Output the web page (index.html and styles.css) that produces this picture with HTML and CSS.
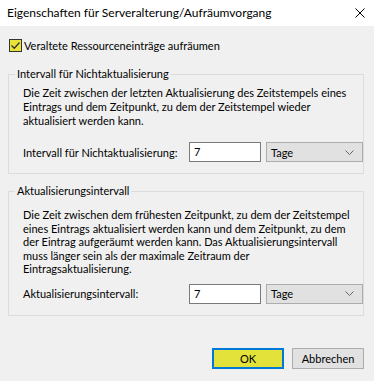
FILE: index.html
```html
<!DOCTYPE html>
<html lang="de">
<head>
<meta charset="utf-8">
<title>Eigenschaften für Serveralterung/Aufräumvorgang</title>
<link rel="stylesheet" href="styles.css">
</head>
<body>
<div class="dialog">
  <div class="titlebar">
    <span class="title">Eigenschaften für Serveralterung/Aufräumvorgang</span>
    <svg class="close" width="10" height="10" viewBox="0 0 10 10"><path d="M0.5 0.5 L9.5 9.5 M9.5 0.5 L0.5 9.5" stroke="#000" stroke-width="1" fill="none"/></svg>
  </div>
  <div class="body">
    <label class="check">
      <span class="box"><svg width="11" height="11" viewBox="0 0 11 11"><path d="M1.5 5.5 L4.3 8.3 L9.5 2.5" stroke="#333" stroke-width="1.3" fill="none"/></svg></span>
      <span>Veraltete Ressourceneinträge aufräumen</span>
    </label>

    <fieldset class="group g1">
      <legend>Intervall für Nichtaktualisierung</legend>
      <p class="desc">Die Zeit zwischen der letzten Aktualisierung des Zeitstempels eines<br>Eintrags und dem Zeitpunkt, zu dem der Zeitstempel wieder<br>aktualisiert werden kann.</p>
      <div class="row r1">
        <span class="lbl">Intervall für Nichtaktualisierung:</span>
        <span class="input">7</span>
        <span class="select">Tage<svg class="chev" width="9" height="5" viewBox="0 0 9 5"><path d="M0.5 0.5 L4.5 4.5 L8.5 0.5" stroke="#666" stroke-width="1" fill="none"/></svg></span>
      </div>
    </fieldset>

    <fieldset class="group g2">
      <legend>Aktualisierungsintervall</legend>
      <p class="desc">Die Zeit zwischen dem frühesten Zeitpunkt, zu dem der Zeitstempel<br>eines Eintrags aktualisiert werden kann und dem Zeitpunkt, zu dem<br>der Eintrag aufgeräumt werden kann. Das Aktualisierungsintervall<br>muss länger sein als der maximale Zeitraum der<br>Eintragsaktualisierung.</p>
      <div class="row r2">
        <span class="lbl">Aktualisierungsintervall:</span>
        <span class="input">7</span>
        <span class="select">Tage<svg class="chev" width="9" height="5" viewBox="0 0 9 5"><path d="M0.5 0.5 L4.5 4.5 L8.5 0.5" stroke="#666" stroke-width="1" fill="none"/></svg></span>
      </div>
    </fieldset>

    <div class="buttons">
      <span class="btn ok">OK</span>
      <span class="btn">Abbrechen</span>
    </div>
  </div>
</div>
</body>
</html>
```
FILE: styles.css
```css
* { box-sizing: border-box; }
html, body { margin: 0; padding: 0; }
body {
  width: 374px;
  height: 381px;
  background: #f0f0f0;
  font-family: Lato, "Liberation Sans", Arial, sans-serif;
  font-size: 11px;
  color: #000;
  overflow: hidden;
  white-space: nowrap;
}
.dialog { width: 374px; height: 381px; display: flex; flex-direction: column; }
.titlebar {
  flex: none;
  height: 26px;
  background: #fff;
  display: flex;
  align-items: center;
  justify-content: space-between;
  padding: 0 9px 0 7px;
}
.title { line-height: 14px; font-size: 12px; }
.close { display: block; }
.body { flex: none; padding: 0 10px 0 8px; display: flex; flex-direction: column; }
.check {
  display: flex;
  align-items: center;
  gap: 2px;
  margin-top: 13px;
  height: 13px;
  padding-left: 1px;
  line-height: 14px;
}
.box {
  width: 13px;
  height: 13px;
  border: 1px solid #333;
  background: #eae43a;
  display: flex;
  align-items: center;
  justify-content: center;
}
.box svg { display: block; }
.group {
  margin: 0;
  border: 1px solid #dcdcdc;
  padding: 0 14px 11px 14px;
  width: 356px;
  min-width: 0;
}
.g1 { margin-top: 15px; }
.g2 { margin-top: 10px; }
.group legend {
  padding: 0 2px;
  margin-left: -8px;
  line-height: 14px;
}
.desc { margin: 0; line-height: 14px; }
.g1 .desc { margin-top: 5px; }
.g2 .desc { margin-top: 10px; line-height: 13.5px; }
.row {
  display: grid;
  grid-template-columns: 161px 72px 97px;
  column-gap: 5px;
  align-items: center;
}
.r1 { margin-top: 14px; }
.r2 { margin-top: 8px; }
.input {
  height: 20px;
  background: #fff;
  border: 1px solid #7a7a7a;
  padding-left: 4px;
  line-height: 18px;
}
.select {
  height: 20px;
  background: #e1e1e1;
  border: 1px solid #adadad;
  padding: 0 8px 0 4px;
  display: flex;
  align-items: center;
  justify-content: space-between;
}
.chev { display: block; }
.buttons {
  display: flex;
  justify-content: flex-end;
  gap: 8px;
  margin-top: 32px;
}
.btn {
  width: 72px;
  height: 21px;
  background: #e1e1e1;
  border: 1px solid #adadad;
  display: flex;
  align-items: center;
  justify-content: center;
}
.btn.ok {
  background: #e2e23a;
  border: 2px solid #0078d7;
}
```
